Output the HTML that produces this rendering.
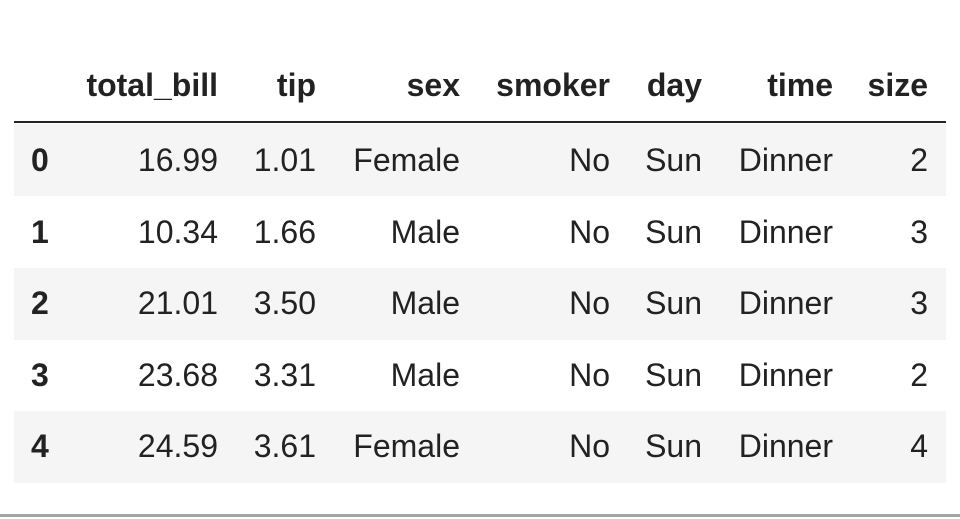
<!DOCTYPE html>
<html><head><meta charset="utf-8"><style>
body{margin:0;width:960px;height:519px;background:#fff;position:relative;overflow:hidden;font-family:"Liberation Sans",Arial,sans-serif;color:#222}
.s{position:absolute;left:14px;width:932px;height:72px;background:#f5f5f5}
.t{position:absolute;font-size:32px;line-height:40px;white-space:nowrap}
.r{text-align:right}
.b{font-weight:bold}
</style></head><body>
<div style="position:absolute;left:14px;top:121px;width:932px;height:2px;background:#222"></div>
<div class="s" style="top:124px"></div>
<div class="s" style="top:268px"></div>
<div class="s" style="top:411px"></div>
<div style="position:absolute;left:0;top:514px;width:960px;height:3px;background:#a0a4a4"></div>
<div id="c"></div>
<script>
var cols=[[218,'r'],[316,'r'],[460,'r'],[610,'r'],[702,'r'],[833,'r'],[928,'r']];
var head=['total_bill','tip','sex','smoker','day','time','size'];
var rows=[['0','16.99','1.01','Female','No','Sun','Dinner','2'],['1','10.34','1.66','Male','No','Sun','Dinner','3'],['2','21.01','3.50','Male','No','Sun','Dinner','3'],['3','23.68','3.31','Male','No','Sun','Dinner','2'],['4','24.59','3.61','Female','No','Sun','Dinner','4']];
var ys=[160,232,303,375,446];var h='';
head.forEach(function(x,i){h+='<div class="t r b" style="right:'+(960-cols[i][0])+'px;top:'+(85-20)+'px">'+x+'</div>';});
rows.forEach(function(r,j){
h+='<div class="t b" style="left:31px;top:'+(ys[j]-20)+'px">'+r[0]+'</div>';
for(var i=1;i<8;i++)h+='<div class="t r" style="right:'+(960-cols[i-1][0])+'px;top:'+(ys[j]-20)+'px">'+r[i]+'</div>';});
document.getElementById('c').innerHTML=h;
</script>
</body></html>
